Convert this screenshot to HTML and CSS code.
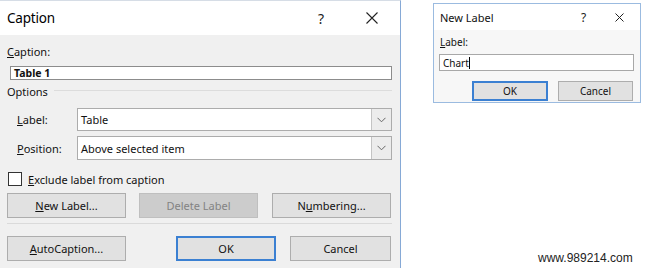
FILE: index.html
```html
<!DOCTYPE html>
<html>
<head>
<meta charset="utf-8">
<link rel="stylesheet" href="styles.css">
</head>
<body>
<div class="page">
  <div class="dlg">
    <div class="titlebar">
      <span class="title">Caption</span>
      <span class="help">?</span>
      <svg class="close" width="12" height="12" viewBox="0 0 12 12"><path d="M0.5 0.5 L11.5 11.5 M11.5 0.5 L0.5 11.5" stroke="#222" stroke-width="1.1" fill="none"/></svg>
    </div>
    <div class="body">
      <div class="lbl-caption"><u>C</u>aption:</div>
      <div class="input-caption">Table 1</div>
      <div class="options"><span>Options</span><span class="rule"></span></div>
      <div class="field first">
        <span class="flabel"><u>L</u>abel:</span>
        <div class="combo"><span class="cval">Table</span><span class="drop"><svg width="9" height="6" viewBox="0 0 9 6"><path d="M0.5 0.8 L4.5 4.8 L8.5 0.8" stroke="#666" stroke-width="1" fill="none"/></svg></span></div>
      </div>
      <div class="field second">
        <span class="flabel"><u>P</u>osition:</span>
        <div class="combo"><span class="cval">Above selected item</span><span class="drop"><svg width="9" height="6" viewBox="0 0 9 6"><path d="M0.5 0.8 L4.5 4.8 L8.5 0.8" stroke="#666" stroke-width="1" fill="none"/></svg></span></div>
      </div>
      <div class="check-row"><span class="box"></span><span><u>E</u>xclude label from caption</span></div>
      <div class="btn-row">
        <div class="btn w119"><u>N</u>ew Label...</div>
        <div class="btn w119 disabled">Delete Label</div>
        <div class="btn w119">N<u>u</u>mbering...</div>
      </div>
      <div class="sep"></div>
      <div class="btn-row2">
        <div class="btn w119"><u>A</u>utoCaption...</div>
        <div class="btn ok">OK</div>
        <div class="btn cancel">Cancel</div>
      </div>
    </div>
  </div>
  <div class="side">
    <div class="dlg2">
      <div class="titlebar2">
        <span class="title2">New Label</span>
        <span class="help2">?</span>
        <svg class="close2" width="9" height="9" viewBox="0 0 9 9"><path d="M0.5 0.5 L8.5 8.5 M8.5 0.5 L0.5 8.5" stroke="#222" stroke-width="1" fill="none"/></svg>
      </div>
      <div class="body2">
        <div class="lbl2"><u>L</u>abel:</div>
        <div class="input2">Chart<span class="caret"></span></div>
        <div class="btn-row3">
          <div class="btn2 ok2">OK</div>
          <div class="btn2">Cancel</div>
        </div>
      </div>
    </div>
    <div class="wm">www.989214.com</div>
  </div>
</div>
</body>
</html>
```
FILE: styles.css
```css
* { box-sizing: border-box; }
html, body { margin: 0; padding: 0; background: #fff; }
body { font-family: "Noto Sans", "Open Sans", sans-serif; color: #111; }
.page { display: flex; width: 645px; height: 268px; overflow: hidden; }

.dlg { width: 401px; height: 268px; border-right: 1px solid #86a9d6; border-top: 1px solid #d6dde6; background: #f0f0f0; display: flex; flex-direction: column; }
.titlebar { height: 34px; background: #fff; display: flex; align-items: center; padding-left: 7px; }
.title { font-size: 13.5px; letter-spacing: -0.2px; color: #000; flex: 1; }
.help { font-size: 14px; width: 10px; margin-right: 38px; color: #222; }
.close { margin-right: 22px; }

.body { padding: 0 8px 0 7px; font-size: 11px; }
.lbl-caption { margin-top: 9px; height: 16px; line-height: 16px; }
.input-caption { margin: 6px 0 0 3px; height: 14px; border: 1px solid #8c8c8c; background: #fff; font-size: 10.5px; font-weight: bold; line-height: 12px; padding-left: 3px; }
.options { margin-top: 4px; height: 16px; line-height: 16px; display: flex; align-items: center; }
.options .rule { flex: 1; height: 1px; background: #dcdcdc; margin-left: 6px; margin-top: -3px; }
.field { display: flex; align-items: center; padding-left: 10px; }
.field.first { margin-top: 8px; height: 23px; }
.field.second { margin-top: 5px; height: 24px; }
.flabel { width: 60px; }
.combo { flex: 1; height: 100%; border: 1px solid #acacac; background: #fff; display: flex; align-items: stretch; }
.cval { flex: 1; padding-left: 3px; display: flex; align-items: center; }
.drop { width: 20px; border-left: 1px solid #c4c4c4; background: #ececec; display: flex; align-items: center; justify-content: center; }
.check-row { margin-top: 12px; height: 14px; display: flex; align-items: center; padding-left: 1px; }
.box { width: 14px; height: 14px; border: 1px solid #333; background: #fff; margin-right: 6px; }
.btn-row { margin-top: 7px; display: flex; gap: 13px; }
.btn-row .btn:last-child { margin-left: 1px; }
.btn { height: 25px; border: 1px solid #adadad; background: #e1e1e1; display: flex; align-items: center; justify-content: center; font-size: 11px; color: #111; }
.w119 { width: 119px; }
.btn.disabled { background: #cccccc; border-color: #bfbfbf; color: #838383; }
.sep { margin-top: 5px; height: 1px; background: #dadada; }
.btn-row2 { margin-top: 12px; display: flex; }
.btn.ok { width: 100px; margin-left: 50px; border: 2px solid #3b80d2; }
.btn.cancel { width: 101px; margin-left: 14px; }

.side { flex: 1; display: flex; flex-direction: column; }
.dlg2 { margin: 3px 0 0 32px; width: 208px; height: 100px; border: 1px solid #9bbbe0; background: #f7f7f7; }
.titlebar2 { height: 26px; background: #fff; display: flex; align-items: center; padding-left: 6px; }
.title2 { font-size: 11px; color: #111; flex: 1; }
.help2 { font-size: 12px; width: 8px; margin-right: 26px; color: #222; }
.close2 { margin-right: 16px; }
.body2 { padding: 0 6px 0 5px; font-size: 10px; }
.lbl2 { margin-top: 5px; height: 14px; line-height: 14px; padding-left: 1px; }
.input2 { margin-top: 5px; height: 17px; border: 1px solid #a8a8a8; background: #fff; padding-left: 3px; display: flex; align-items: center; font-size: 10px; }
.caret { width: 1px; height: 12px; background: #000; margin-left: 0; }
.btn-row3 { margin-top: 10px; display: flex; gap: 10px; padding-left: 33px; }
.btn2 { width: 75px; height: 20px; border: 1px solid #adadad; background: #e1e1e1; display: flex; align-items: center; justify-content: center; font-size: 10px; }
.btn2.ok2 { width: 76px; border: 2px solid #3b80d2; }
.wm { margin: auto 0 3px 137px; font-family: "Liberation Sans", Arial, sans-serif; font-size: 12px; color: #222; line-height: 14px; }
```
